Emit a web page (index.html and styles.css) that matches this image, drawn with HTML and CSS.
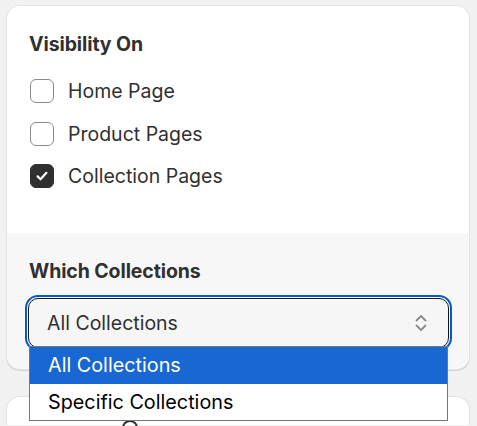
FILE: index.html
```html
<!DOCTYPE html>
<html lang="en">
<head>
<meta charset="utf-8">
<title>Visibility settings</title>
<link rel="stylesheet" href="styles.css">
</head>
<body>
<div class="card">
  <section class="top">
    <h2 class="title">Visibility On</h2>
    <ul class="checks">
      <li class="check"><span class="box"></span><span class="label">Home Page</span></li>
      <li class="check"><span class="box"></span><span class="label">Product Pages</span></li>
      <li class="check"><span class="box checked"><svg viewBox="0 0 24 24" width="24" height="24"><path d="M7.2 12.4l3.2 3.1 6.4-7" fill="none" stroke="#fff" stroke-width="2.4" stroke-linecap="round" stroke-linejoin="round"/></svg></span><span class="label">Collection Pages</span></li>
    </ul>
  </section>
  <section class="bottom">
    <h2 class="title">Which Collections</h2>
    <div class="select-wrap">
      <div class="select">
        <span>All Collections</span>
        <svg class="chev" viewBox="0 0 12 18" width="12" height="18"><path d="M1.5 6.5L6 2l4.5 4.5M1.5 11.5L6 16l4.5-4.5" fill="none" stroke="#8a8a8a" stroke-width="1.8" stroke-linecap="round" stroke-linejoin="round"/></svg>
      </div>
      <ul class="listbox">
        <li class="opt active">All Collections</li>
        <li class="opt">Specific Collections</li>
      </ul>
    </div>
  </section>
</div>
<div class="card card2">
  <span class="ring"></span>
</div>
</body>
</html>
```
FILE: styles.css
```css
* { box-sizing: border-box; }
html, body { margin: 0; padding: 0; }
body {
  background: #f1f1f1;
  font-family: Inter, "Noto Sans", sans-serif;
  color: #303030;
  width: 477px;
  height: 426px;
  overflow: hidden;
}
.card {
  margin: 5px 7px 0 6px;
  background: #fff;
  border: 1px solid #e3e3e3;
  border-radius: 14px;
  box-shadow: 0 1px 0 #d4d4d4;
}
.top {
  padding: 26px 22px 0 22px;
  height: 227px;
  background: #fff;
  border-radius: 14px 14px 0 0;
}
.title {
  margin: 0;
  font-size: 19.5px;
  line-height: 24px;
  font-weight: 650;
  letter-spacing: -0.1px;
}
.checks {
  list-style: none;
  margin: 23px 0 0 1px;
  padding: 0;
  display: flex;
  flex-direction: column;
  gap: 18.5px;
}
.check {
  display: flex;
  align-items: center;
  gap: 14px;
  height: 24px;
}
.box {
  width: 24px;
  height: 24px;
  border: 1.5px solid #8a8a8a;
  border-radius: 6px;
  background: #fff;
  display: flex;
  align-items: center;
  justify-content: center;
  flex: none;
}
.box.checked {
  background: #303030;
  border-color: #303030;
}
.box svg { display: block; }
.label {
  font-size: 19.5px;
  line-height: 24px;
}
.bottom {
  background: #f7f7f7;
  padding: 26px 22px 0 22px;
  height: 136px;
  border-radius: 0 0 13px 13px;
}
.select-wrap {
  position: relative;
  margin-top: 15px;
}
.select {
  height: 50px;
  margin: 0 -2px 0 -1px;
  border: 1px solid #1a1a1a;
  border-radius: 10px;
  background: #f6f6f6;
  outline: 2px solid #005bd3;
  outline-offset: 1px;
  display: flex;
  align-items: center;
  justify-content: space-between;
  padding: 0 21px 0 18px;
  font-size: 19.5px;
}
.chev { display: block; }
.listbox {
  position: absolute;
  left: 0;
  right: -1px;
  top: 48px;
  margin: 0;
  padding: 0;
  list-style: none;
  background: #fff;
  border: 1px solid #767676;
  z-index: 2;
}
.opt {
  height: 36.5px;
  line-height: 36px;
  padding-left: 18px;
  font-size: 19.8px;
  color: #000;
}
.opt.active {
  background: #1967d2;
  color: #fff;
}
.card2 {
  margin-top: 26px;
  height: 29px;
  position: relative;
  border-bottom: none;
  border-radius: 14px 14px 0 0;
  box-shadow: none;
}
.ring {
  position: absolute;
  left: 115px;
  top: 23px;
  width: 16px;
  height: 16px;
  border: 2px solid #303030;
  border-radius: 50%;
}
```
